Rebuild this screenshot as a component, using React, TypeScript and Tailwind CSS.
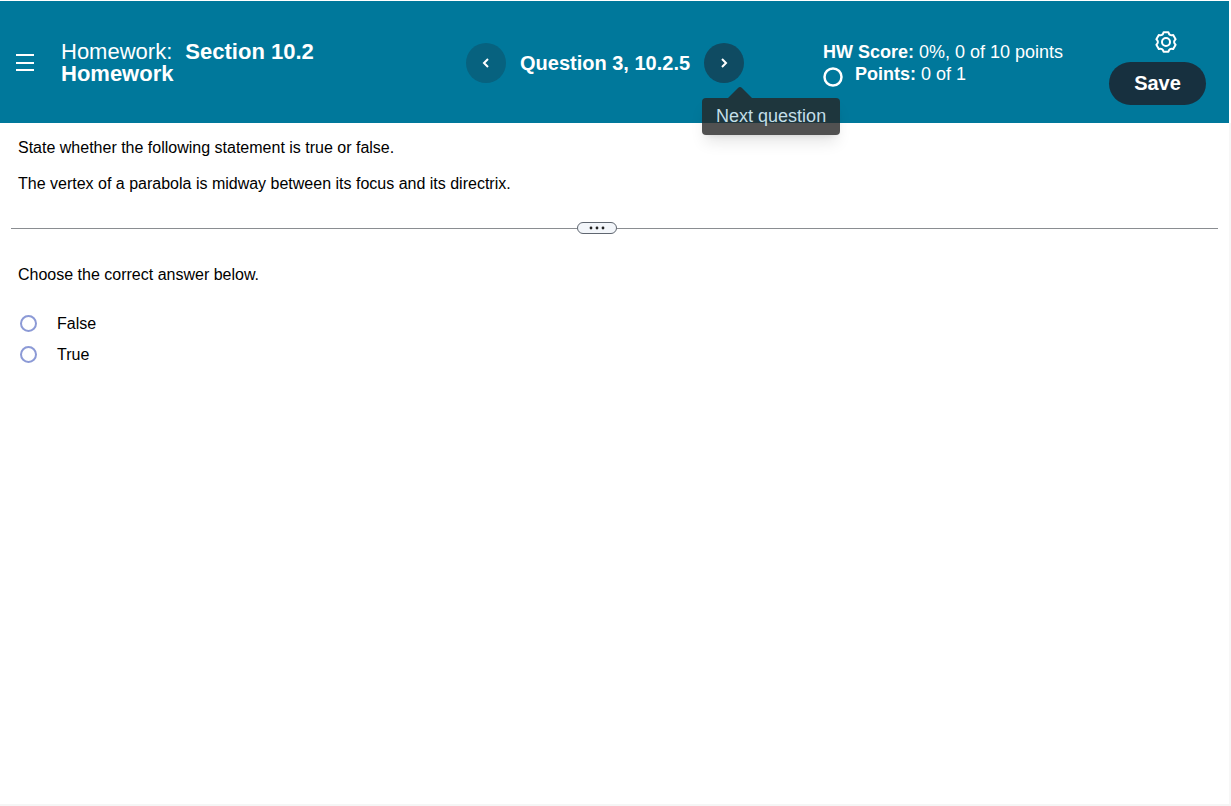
import { useState } from "react";

function Header() {
  return (
    <header className="mr-0.5 mt-px grid h-[122px] grid-cols-[466fr_357fr_286fr_120fr] bg-[#00789b] pt-0.5 text-white">
      <div className="flex items-center pl-4">
        <button type="button" aria-label="Open menu" className="shrink-0">
          <svg width="18" height="18" viewBox="0 0 18 18" stroke="currentColor" strokeWidth="2" className="block">
            <path d="M0 1h18M0 9h18M0 16h18" />
          </svg>
        </button>
        <h1 className="ml-[27px] text-[22px] leading-[22px]">
          <span className="block">
            Homework: <strong className="ml-[7px] font-bold">Section 10.2</strong>
          </span>
          <strong className="block font-bold">Homework</strong>
        </h1>
      </div>

      <nav aria-label="Questions" className="flex items-center">
        <button
          type="button"
          aria-label="Previous question"
          className="flex size-10 items-center justify-center rounded-full bg-[#07627f]"
        >
          <svg width="8" height="12" viewBox="0 0 8 12" fill="none" stroke="currentColor" strokeWidth="2">
            <path d="M6 2 2 6l4 4" />
          </svg>
        </button>
        <h2 className="mx-3.5 whitespace-nowrap text-xl font-bold">Question 3, 10.2.5</h2>
        <div className="relative">
          <button
            type="button"
            aria-label="Next question"
            aria-describedby="next-tip"
            className="flex size-10 items-center justify-center rounded-full bg-[#0f4b62]"
          >
            <svg width="8" height="12" viewBox="0 0 8 12" fill="none" stroke="currentColor" strokeWidth="2">
              <path d="m2 2 4 4-4 4" />
            </svg>
          </button>
          <div id="next-tip" role="tooltip" className="absolute -left-0.5 top-full z-10 pt-1">
            <svg width="24" height="11" viewBox="0 0 24 11" className="ml-[26px] block">
              <path d="M0 11 10 1q2-2 4 0l10 10z" fill="#262626" fillOpacity="0.8" />
            </svg>
            <div className="whitespace-nowrap rounded bg-[#262626]/80 px-3.5 py-1.5 text-lg leading-[25px] text-[#c3dfe8] shadow-lg">
              Next question
            </div>
          </div>
        </div>
      </nav>

      <div className="flex flex-col justify-center whitespace-nowrap text-lg leading-[22px]">
        <p>
          <strong className="font-bold">HW Score:</strong> 0%, 0 of 10 points
        </p>
        <p className="flex items-end gap-3">
          <svg width="20" height="20" viewBox="0 0 20 20" fill="none" stroke="currentColor" strokeWidth="2.5" className="-mb-0.5">
            <circle cx="10" cy="10" r="8.5" />
          </svg>
          <span>
            <strong className="font-bold">Points:</strong> 0 of 1
          </span>
        </p>
      </div>

      <div className="flex flex-col items-end justify-center pr-[23px] pt-2.5">
        <button type="button" aria-label="Settings" className="mr-[29px]">
          <svg width="22" height="22" viewBox="0 0 22 22" fill="none" stroke="currentColor" strokeWidth="2" strokeLinejoin="round" className="block">
            <path d="M8.600 1.300h4.800Q14.300 5.300 18.200 4.050L20.600 8.200Q17.600 11 20.600 13.800L18.200 17.950Q14.300 16.700 13.400 20.700H8.600Q7.700 16.700 3.800 17.950L1.400 13.800Q4.400 11 1.400 8.200L3.800 4.050Q7.700 5.300 8.600 1.300z" />
            <circle cx="11" cy="11" r="4" />
          </svg>
        </button>
        <button type="button" className="mt-[9px] h-[43px] w-[97px] rounded-full bg-[#17303f] pb-0.5 text-xl font-bold">
          Save
        </button>
      </div>
    </header>
  );
}

export default function App() {
  const [answer, setAnswer] = useState("");

  return (
    <div className="flex min-h-screen flex-col border-b-2 border-[#f5f5f5] bg-white font-['Liberation_Sans',Arial,sans-serif] text-base text-black">
      <Header />
      <main className="grow border-r-2 border-[#f7f7f7]">
        <section className="space-y-3 px-[18px] pt-[13px] leading-6">
          <p>State whether the following statement is true or false.</p>
          <p>The vertex of a parabola is midway between its focus and its directrix.</p>
        </section>

        <div className="mx-[11px] mt-[26px] flex items-center">
          <div className="h-px grow-[566] bg-[#8a8d91]" />
          <button
            type="button"
            aria-label="Resize panels"
            className="flex h-3 w-10 items-center justify-center rounded-full border border-[#5f6670] bg-[#f3f6fa]"
          >
            <svg width="16" height="4" viewBox="0 0 16 4" fill="#222">
              <circle cx="2" cy="2" r="1.400" />
              <circle cx="8" cy="2" r="1.400" />
              <circle cx="14" cy="2" r="1.400" />
            </svg>
          </button>
          <div className="h-px grow-[601] bg-[#8a8d91]" />
        </div>

        <fieldset className="px-[18px] pt-[29px]">
          <legend className="contents">Choose the correct answer below.</legend>
          <div className="mt-[21px] flex flex-col">
            {["False", "True"].map((label) => (
              <label key={label} className="flex h-[31px] items-center gap-5">
                <input
                  type="radio"
                  name="answer"
                  value={label}
                  checked={answer === label}
                  onChange={() => setAnswer(label)}
                  className="ml-0.5 size-[17px] appearance-none rounded-full border-2 border-[#8c9ad6] bg-white checked:border-[5px]"
                />
                {label}
              </label>
            ))}
          </div>
        </fieldset>
      </main>
    </div>
  );
}
